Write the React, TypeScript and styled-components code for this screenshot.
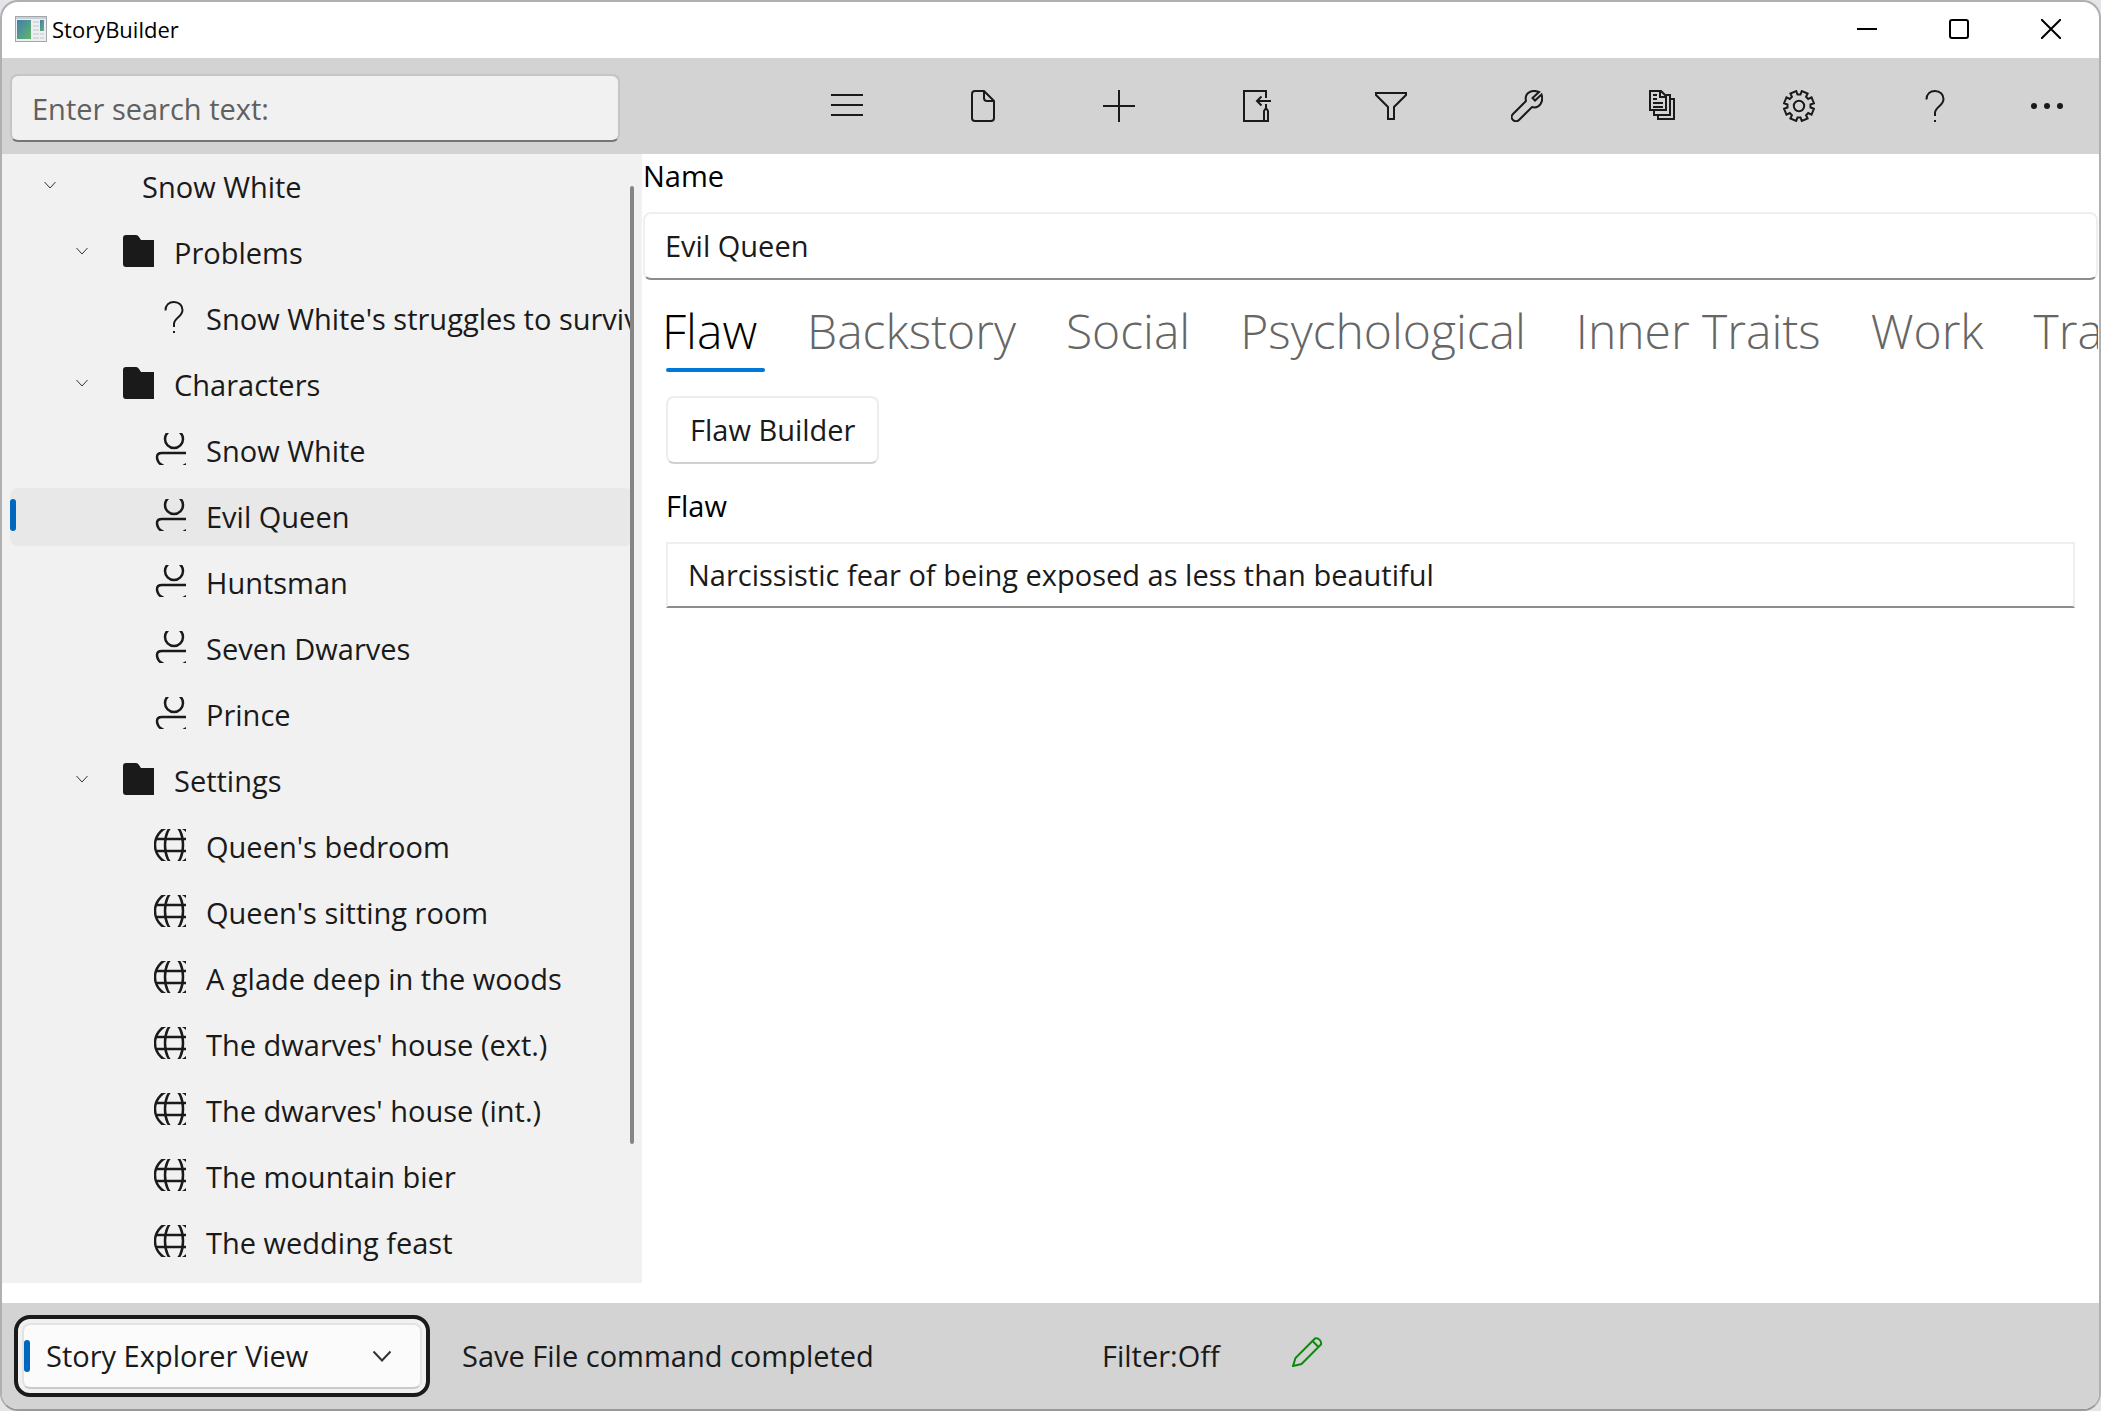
import React, { useState } from 'react';
import styled, { createGlobalStyle } from 'styled-components';

const ink = '#1a1a1a';
const accent = '#0067c0';

const GlobalStyle = createGlobalStyle`
  *, *::before, *::after { box-sizing: border-box; }
  body {
    margin: 0;
    background: #e4e5e8;
    font-family: "Open Sans", "Noto Sans", sans-serif;
    font-size: 29px;
    line-height: 40px;
    color: ${ink};
  }
  button, input, select { font: inherit; color: inherit; margin: 0; }
  h1, p, ul { margin: 0; padding: 0; }
  ul { list-style: none; }
`;

const AppWindow = styled.div`
  display: flex;
  flex-direction: column;
  min-height: 100vh;
  border: 2px solid #b0b0b0;
  border-bottom-color: #999;
  border-radius: 18px;
  background: #fff;
  overflow: hidden;
`;

/* ---------- title bar ---------- */

const TitleBar = styled.header`
  display: flex;
  align-items: center;
  height: 56px;
  padding: 0 2px 2px 13px;
`;

const AppTitle = styled.h1`
  flex: 1;
  margin-left: 5px;
  font-size: 22px;
  line-height: 32px;
  font-weight: 400;
  color: #000;
`;

const CaptionButton = styled.button`
  display: grid;
  place-items: center;
  width: 92px;
  height: 54px;
  padding: 0;
  border: 0;
  background: none;
  color: #000;
`;

/* ---------- command bar ---------- */

const CommandBar = styled.div`
  display: flex;
  align-items: center;
  justify-content: space-between;
  height: 96px;
  padding: 0 8px;
  background: #d3d3d3;
`;

const TextBox = styled.input<{ $square?: boolean }>`
  display: block;
  width: 100%;
  height: ${(p) => (p.$square ? 66 : 68)}px;
  padding: 0 20px 2px;
  border: 2px solid #efefef;
  border-bottom-color: #8c8c8c;
  border-radius: ${(p) => (p.$square ? 0 : 8)}px;
  background: #fff;
  outline: none;
`;

const SearchBox = styled(TextBox)`
  width: 610px;
  margin-top: 4px;
  padding-bottom: 0;
  border-color: #c5c5c5;
  border-bottom-color: #767676;
  background: #f1f1f1;
  &::placeholder { color: #606060; opacity: 1; }
`;

const Commands = styled.div`
  display: flex;
`;

const CommandButton = styled.button<{ $narrow?: boolean }>`
  display: grid;
  place-items: center;
  width: ${(p) => (p.$narrow ? 88 : 136)}px;
  height: 96px;
  padding: 0;
  border: 0;
  background: none;
`;

/* ---------- story tree ---------- */

const Main = styled.main`
  display: grid;
  grid-template-columns: 640px minmax(0, 1fr);
  flex: 1;
`;

const Sidebar = styled.nav`
  position: relative;
  margin-bottom: 20px;
  padding: 4px 9px 0 8px;
  background: #f1f1f1;
`;

const Tree = styled.ul`
  display: flex;
  flex-direction: column;
  gap: 8px;
`;

const ScrollThumb = styled.div`
  position: absolute;
  top: 32px;
  right: 8px;
  bottom: 139px;
  width: 4px;
  border-radius: 2px;
  background: #858585;
`;

const TreeRow = styled.button<{ $level: number; $selected: boolean }>`
  display: flex;
  align-items: center;
  position: relative;
  width: 100%;
  height: 58px;
  padding: 0 0 0 ${(p) => p.$level * 32}px;
  border: 0;
  border-radius: 8px;
  background: ${(p) => (p.$selected ? '#e8e8e8' : 'transparent')};
  text-align: left;
  white-space: nowrap;
  overflow: hidden;

  &::before {
    content: '';
    display: ${(p) => (p.$selected ? 'block' : 'none')};
    position: absolute;
    left: 0;
    top: 11px;
    width: 6px;
    height: 32px;
    border-radius: 3px;
    background: ${accent};
  }
`;

const Slot = styled.span<{ $width: number }>`
  display: flex;
  justify-content: center;
  flex: none;
  width: ${(p) => p.$width}px;
  padding-bottom: 4px;
`;

const RowLabel = styled.span`
  padding-left: 20px;
`;

/* ---------- editor ---------- */

const Editor = styled.section`
  min-width: 0;
  padding: 2px 1px 0;
`;

const FieldLabel = styled.label`
  display: block;
  margin-bottom: 16px;
  color: #000;
`;

const Tabs = styled.div`
  display: flex;
  gap: 50px;
  padding-left: 19px;
  overflow: hidden;
  white-space: nowrap;
`;

const Tab = styled.button<{ $active: boolean }>`
  flex: none;
  position: relative;
  height: 92px;
  padding: 10px 0 0;
  border: 0;
  background: none;
  font-size: 48px;
  line-height: 72px;
  font-weight: 350;
  color: ${(p) => (p.$active ? '#000' : '#666')};

  &::after {
    content: '';
    display: ${(p) => (p.$active ? 'block' : 'none')};
    position: absolute;
    left: 4px;
    right: -8px;
    bottom: 0;
    height: 4px;
    border-radius: 2px;
    background: #0078d7;
  }
`;

const TabPanel = styled.div`
  padding: 24px 23px 0;
`;

const PushButton = styled.button`
  display: block;
  height: 68px;
  margin-bottom: 22px;
  padding: 0 22px;
  border: 2px solid #ededed;
  border-bottom-color: #d0d0d0;
  border-radius: 8px;
  background: #fff;
`;

/* ---------- status bar ---------- */

const StatusBar = styled.footer`
  display: grid;
  grid-template-columns: 416px 608px 158px auto;
  column-gap: 32px;
  align-items: center;
  height: 106px;
  padding-left: 12px;
  background: #d3d3d3;
`;

const ViewPicker = styled.div`
  display: flex;
  align-items: center;
  position: relative;
  padding: 4px;
  border: 4px solid ${ink};
  border-radius: 16px;
  background: #f1f1f1;

  &::before {
    content: '';
    position: absolute;
    left: 6px;
    width: 6px;
    height: 32px;
    border-radius: 3px;
    background: ${accent};
  }
  svg {
    position: absolute;
    right: 35px;
    pointer-events: none;
  }
`;

const ViewSelect = styled.select`
  appearance: none;
  width: 100%;
  height: 66px;
  padding: 0 70px 0 22px;
  border: 2px solid #e3e3e3;
  border-bottom-color: #cacaca;
  border-radius: 8px;
  background: #fbfbfb;
  outline: none;
`;

const EditState = styled.span`
  display: flex;
  padding-bottom: 10px;
`;

/* ---------- drawings ---------- */

const Glyph = ({ children, color = 'currentColor', stroke = 2 }: {
  children: React.ReactNode; color?: string; stroke?: number;
}) => (
  <svg width="32" height="32" viewBox="0 0 32 32" fill="none" stroke={color} strokeWidth={stroke} aria-hidden="true">
    {children}
  </svg>
);

const Chevron = ({ size, stroke = 1 }: { size: number; stroke?: number }) => (
  <svg width={size} height="32" viewBox={`0 0 ${size} 32`} fill="none" stroke="#333" strokeWidth={stroke} aria-hidden="true">
    <path d={`M0.5 ${16 - size / 4} L${size / 2} ${16 + size / 4} L${size - 0.5} ${16 - size / 4}`} />
  </svg>
);

const gearPath = (() => {
  const points: string[] = [];
  for (let tooth = 0; tooth < 8; tooth += 1) {
    const mid = 22.5 + tooth * 45;
    const corners: [number, number][] = [[-15, 11.6], [-12, 15.2], [12, 15.2], [15, 11.6]];
    corners.forEach(([offset, radius]) => {
      const a = ((mid + offset) * Math.PI) / 180;
      points.push(`${(16 + radius * Math.cos(a)).toFixed(2)} ${(16 + radius * Math.sin(a)).toFixed(2)}`);
    });
  }
  return `M${points.join('L')}Z`;
})();

const Question = () => (
  <>
    <path d="M7.5 9.5 C7.5 4 11 1 16 1 C21 1 24.5 4.5 24.5 9 C24.5 16 16 17 16 23 V26" />
    <path d="M16 30 V32" />
  </>
);

const commands = [
  { label: 'Menu', icon: <path d="M0 5H32M0 15H32M0 25H32" /> },
  { label: 'File', icon: <path d="M17 1H8Q5 1 5 4V28Q5 31 8 31H24Q27 31 27 28V11L17 1V8Q17 11 20 11H27" /> },
  { label: 'Add', icon: <path d="M16 0V32M0 16H32" /> },
  {
    label: 'Move',
    icon: (
      <>
        <path d="M27 8V1H5V31H25M32 11H18.5M22.5 6.5L18 11L22.5 15.5M27 14V18" />
        <path d="M27 18L25 21V31H29V21Z" />
      </>
    ),
  },
  { label: 'Filter', icon: <path d="M1 3H31V5L19 17V29H13V17L1 5Z" /> },
  { label: 'Tools', icon: <path d="M28 2C21 -1 13 3 15 11L2 24A4 4 0 0 0 8 30L21 17C28 19 33 12 30.5 4.5L24 10.5L21.5 8Z" /> },
  {
    label: 'Reports',
    icon: (
      <>
        <path d="M3 1H14L19 6V20H3ZM13 1V7H19M7 21V25H23V5H19M11 25V29H27V9H23" />
        <path d="M6 5H10M6 9H10M6 13H16M6 17H16" />
      </>
    ),
  },
  { label: 'Preferences', icon: <><path d={gearPath} /><circle cx="16" cy="16" r="5.2" /></> },
  { label: 'Help', icon: <Question /> },
];

const nodeIcons = {
  none: null,
  folder: <path fill={ink} stroke="none" d="M4 0H14Q16 0 17 2L19 5H32V32H4Q1 32 1 29V3Q1 0 4 0Z" />,
  problem: <g transform="translate(4 0)" strokeWidth="2"><Question /></g>,
  person: (
    <>
      <circle cx="20" cy="6" r="9" />
      <path d="M32 20H8Q3 20 3 24Q3 30 9.5 33M29 33L33 31" />
    </>
  ),
  globe: (
    <>
      <circle cx="20" cy="16" r="19" />
      <ellipse cx="20" cy="16" rx="9" ry="19" />
      <path d="M2 10H32M2 22H32" />
    </>
  ),
};

type TreeNode = { id: string; label: string; level: number; icon: keyof typeof nodeIcons; open?: boolean };

const nodes: TreeNode[] = [
  { id: 'story', label: 'Snow White', level: 0, icon: 'none', open: true },
  { id: 'problems', label: 'Problems', level: 1, icon: 'folder', open: true },
  { id: 'struggle', label: "Snow White's struggles to survive", level: 2, icon: 'problem' },
  { id: 'characters', label: 'Characters', level: 1, icon: 'folder', open: true },
  { id: 'snow', label: 'Snow White', level: 2, icon: 'person' },
  { id: 'queen', label: 'Evil Queen', level: 2, icon: 'person' },
  { id: 'huntsman', label: 'Huntsman', level: 2, icon: 'person' },
  { id: 'dwarves', label: 'Seven Dwarves', level: 2, icon: 'person' },
  { id: 'prince', label: 'Prince', level: 2, icon: 'person' },
  { id: 'settings', label: 'Settings', level: 1, icon: 'folder', open: true },
  { id: 'bedroom', label: "Queen's bedroom", level: 2, icon: 'globe' },
  { id: 'sitting', label: "Queen's sitting room", level: 2, icon: 'globe' },
  { id: 'glade', label: 'A glade deep in the woods', level: 2, icon: 'globe' },
  { id: 'ext', label: "The dwarves' house (ext.)", level: 2, icon: 'globe' },
  { id: 'int', label: "The dwarves' house (int.)", level: 2, icon: 'globe' },
  { id: 'bier', label: 'The mountain bier', level: 2, icon: 'globe' },
  { id: 'feast', label: 'The wedding feast', level: 2, icon: 'globe' },
];

const tabs = ['Flaw', 'Backstory', 'Social', 'Psychological', 'Inner Traits', 'Work', 'Traits'];

const AppLogo = () => (
  <svg width="32" height="26" viewBox="0 0 32 26" aria-hidden="true">
    <defs>
      <linearGradient id="screen" x1="0" y1="0" x2="1" y2="1">
        <stop offset="0" stopColor="#3f7fae" />
        <stop offset="1" stopColor="#63b56c" />
      </linearGradient>
    </defs>
    <rect x="0.5" y="0.5" width="31" height="25" fill="#eceef1" stroke="#a3a7ad" />
    <path d="M1 2H31" stroke="#c9d0da" strokeWidth="2" />
    <rect x="2" y="4" width="14" height="19" fill="url(#screen)" />
    <path d="M18 6H24M18 10H24M18 14H24M18 18H24M18 22H24M25 18H29M25 22H29" stroke="#c4c7cb" strokeWidth="1" />
    <rect x="25" y="4" width="4" height="11" fill="url(#screen)" />
  </svg>
);

export default function App() {
  const [selected, setSelected] = useState('queen');
  const [tab, setTab] = useState('Flaw');

  return (
    <>
      <GlobalStyle />
      <AppWindow>
        <TitleBar>
          <AppLogo />
          <AppTitle>StoryBuilder</AppTitle>
          <CaptionButton aria-label="Minimize">
            <svg width="20" height="20" fill="none" stroke="currentColor" strokeWidth="2"><path d="M0 10H20" /></svg>
          </CaptionButton>
          <CaptionButton aria-label="Maximize">
            <svg width="20" height="20" fill="none" stroke="currentColor" strokeWidth="2"><rect x="1" y="1" width="18" height="18" rx="2" /></svg>
          </CaptionButton>
          <CaptionButton aria-label="Close">
            <svg width="20" height="20" fill="none" stroke="currentColor" strokeWidth="2"><path d="M0 0L20 20M20 0L0 20" /></svg>
          </CaptionButton>
        </TitleBar>

        <CommandBar>
          <SearchBox aria-label="Search" placeholder="Enter search text:" />
          <Commands>
            {commands.map((command) => (
              <CommandButton key={command.label} aria-label={command.label}>
                <Glyph>{command.icon}</Glyph>
              </CommandButton>
            ))}
            <CommandButton $narrow aria-label="More">
              <Glyph>
                <g fill="currentColor" stroke="none">
                  <circle cx="3" cy="16" r="3" />
                  <circle cx="16" cy="16" r="3" />
                  <circle cx="29" cy="16" r="3" />
                </g>
              </Glyph>
            </CommandButton>
          </Commands>
        </CommandBar>

        <Main>
          <Sidebar aria-label="Story explorer">
            <Tree>
              {nodes.map((node) => (
                <li key={node.id}>
                  <TreeRow
                    $level={node.level}
                    $selected={node.id === selected}
                    aria-expanded={node.open}
                    onClick={() => setSelected(node.id)}
                  >
                    <Slot $width={80}>{node.open && <Chevron size={12} />}</Slot>
                    <Slot $width={32}>
                      <Glyph stroke={2.5}>{nodeIcons[node.icon]}</Glyph>
                    </Slot>
                    <RowLabel>{node.label}</RowLabel>
                  </TreeRow>
                </li>
              ))}
            </Tree>
            <ScrollThumb />
          </Sidebar>

          <Editor>
            <FieldLabel htmlFor="name">Name</FieldLabel>
            <TextBox id="name" defaultValue="Evil Queen" />
            <Tabs role="tablist">
              {tabs.map((name) => (
                <Tab key={name} role="tab" aria-selected={tab === name} $active={tab === name} onClick={() => setTab(name)}>
                  {name}
                </Tab>
              ))}
            </Tabs>
            <TabPanel role="tabpanel">
              <PushButton>Flaw Builder</PushButton>
              <FieldLabel htmlFor="flaw">Flaw</FieldLabel>
              <TextBox id="flaw" $square defaultValue="Narcissistic fear of being exposed as less than beautiful" />
            </TabPanel>
          </Editor>
        </Main>

        <StatusBar>
          <ViewPicker>
            <ViewSelect aria-label="View" defaultValue="explorer">
              <option value="explorer">Story Explorer View</option>
              <option value="narrator">Story Narrator View</option>
            </ViewSelect>
            <Chevron size={18} stroke={2} />
          </ViewPicker>
          <p>Save File command completed</p>
          <p>Filter:Off</p>
          <EditState>
            <Glyph color="#0b8a0b">
              <path d="M1 31L3.5 23L23 3.5A5 5 0 0 1 29 9.5L9.5 29ZM20.5 6L26.5 12" />
            </Glyph>
          </EditState>
        </StatusBar>
      </AppWindow>
    </>
  );
}
